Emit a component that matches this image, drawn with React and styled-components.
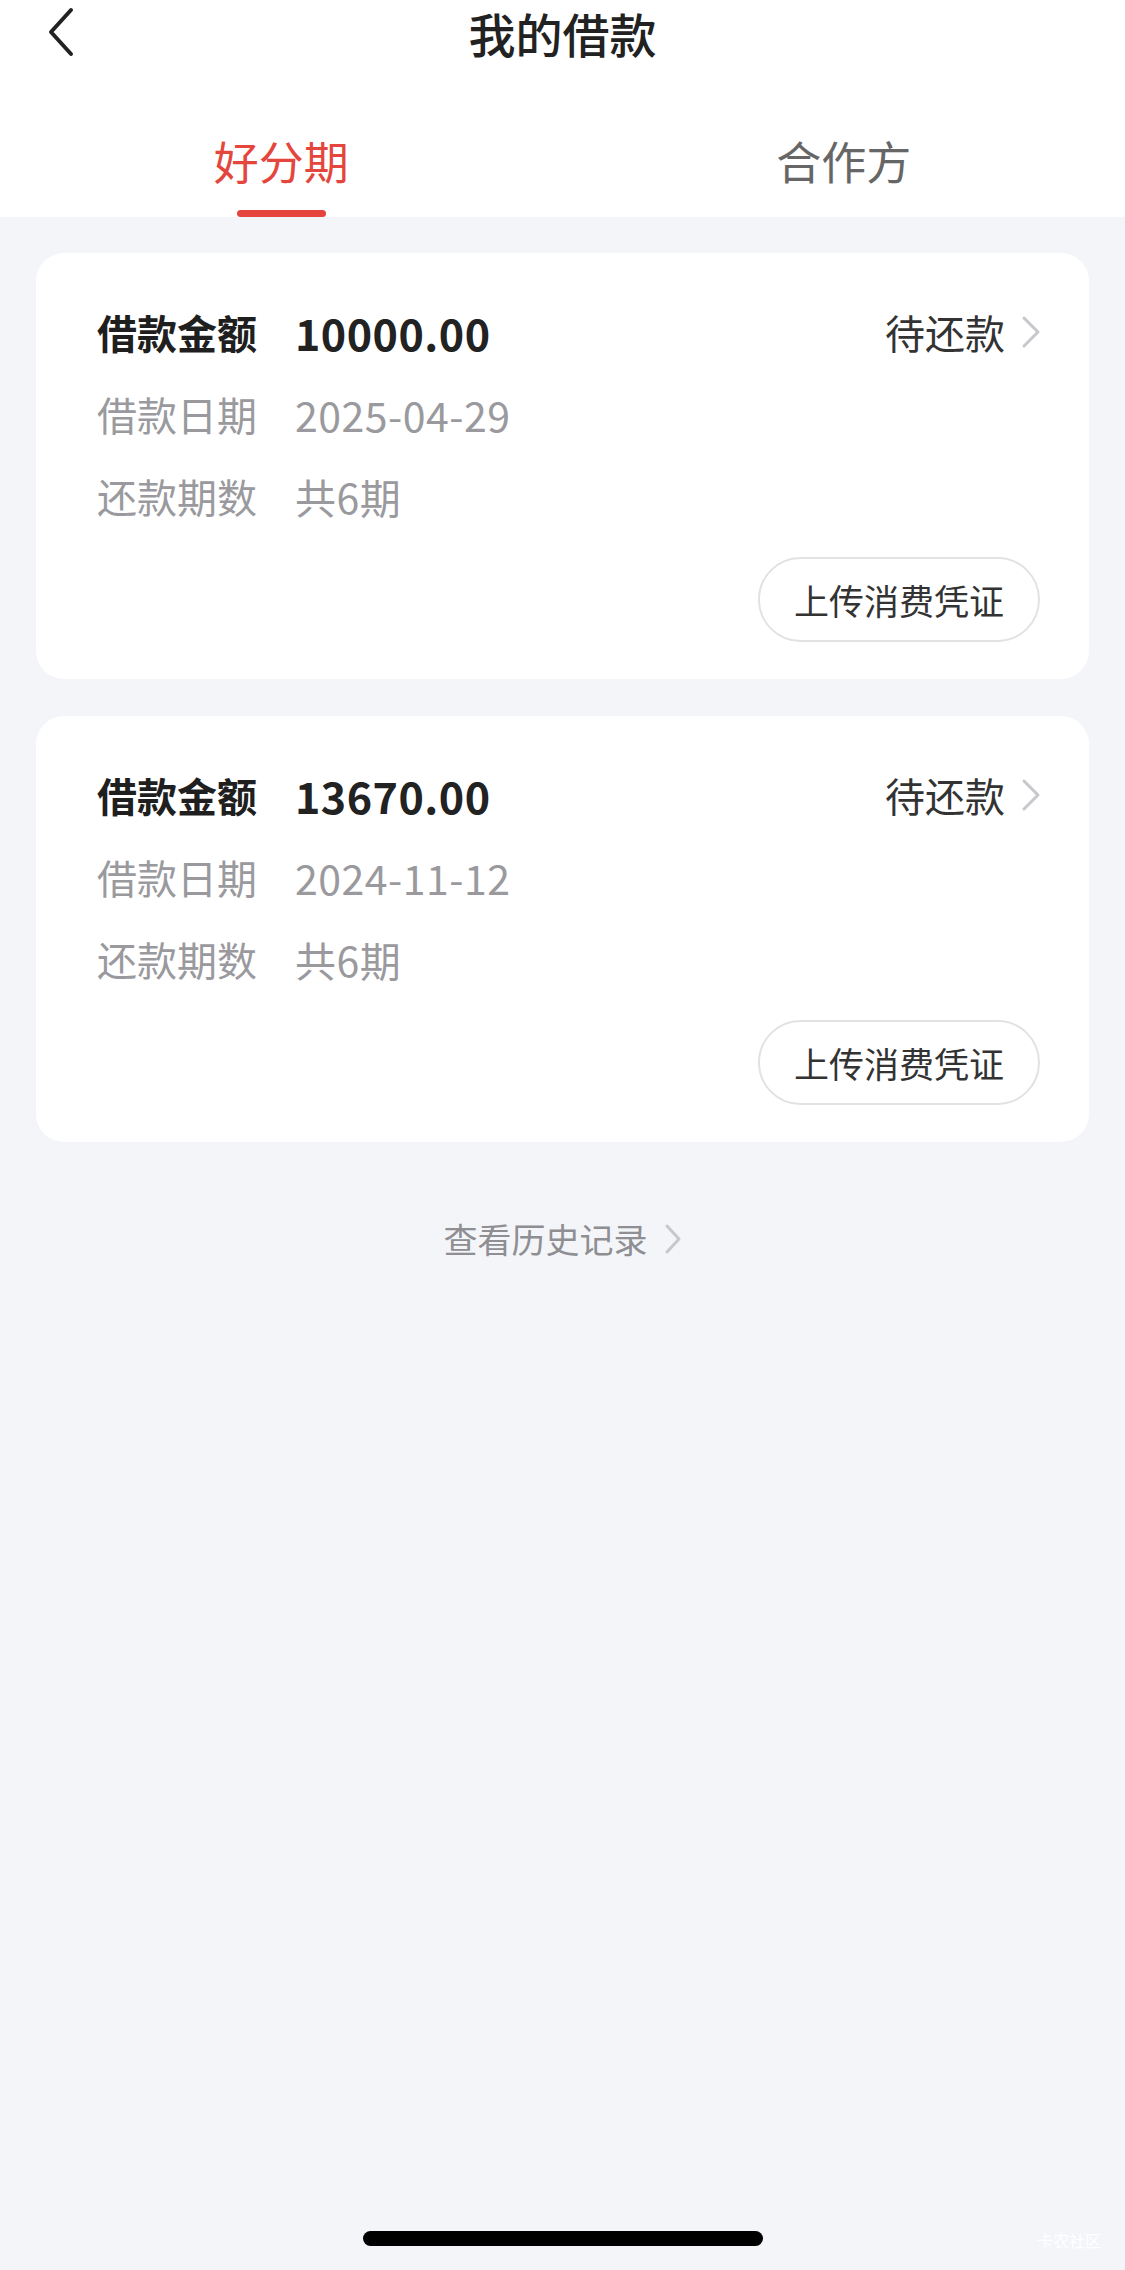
import React, { useState } from "react";
import styled, { createGlobalStyle } from "styled-components";

const GlobalStyle = createGlobalStyle`
  html, body {
    margin: 0;
    padding: 0;
    background: #f4f5f9;
    font-family: "Noto Sans CJK SC", "Noto Sans", sans-serif;
  }
  * { box-sizing: border-box; }
`;

const Page = styled.div`
  width: 1125px;
  min-height: 2270px;
  display: flex;
  flex-direction: column;
  background: #f4f5f9;
  position: relative;
`;

const Header = styled.div`
  background: #fff;
`;

const NavBar = styled.div`
  height: 66px;
  display: flex;
  align-items: center;
  justify-content: center;
  position: relative;
`;

const BackButton = styled.div`
  position: absolute;
  left: 46px;
  top: 6px;
  width: 30px;
  height: 52px;
  display: flex;
  align-items: center;
`;

const Title = styled.div`
  font-size: 47px;
  line-height: 66px;
  font-weight: 500;
  color: #222;
`;

const Tabs = styled.div`
  display: flex;
`;

const Tab = styled.div`
  flex: 1;
  display: flex;
  flex-direction: column;
  align-items: center;
  padding-top: 65px;
`;

const TabLabel = styled.div`
  font-size: 45px;
  line-height: 60px;
  color: ${(p) => (p.$active ? "#e4463d" : "#666")};
  margin-bottom: 19px;
`;

const TabLine = styled.div`
  width: 89px;
  height: 7px;
  border-radius: 4px;
  background: ${(p) => (p.$active ? "#e4463d" : "transparent")};
`;

const Content = styled.div`
  padding: 36px 36px 0;
  display: flex;
  flex-direction: column;
  gap: 37px;
`;

const Card = styled.div`
  background: #fff;
  border-radius: 28px;
  padding: 51px 48px 37px 61px;
  display: flex;
  flex-direction: column;
`;

const Rows = styled.div`
  display: flex;
  flex-direction: column;
  gap: 26px;
`;

const Row = styled.div`
  display: flex;
  align-items: center;
  height: 56px;
`;

const Label = styled.div`
  width: 198px;
  font-size: 40px;
  font-weight: ${(p) => (p.$strong ? 700 : 400)};
  color: ${(p) => (p.$strong ? "#1f1f1f" : "#9a9a9e")};
`;

const Value = styled.div`
  flex: 1;
  font-size: ${(p) => (p.$strong ? "43px" : "41px")};
  font-weight: ${(p) => (p.$strong ? 700 : 400)};
  color: ${(p) => (p.$strong ? "#222" : "#9a9a9e")};
  letter-spacing: 0.5px;
`;

const Status = styled.div`
  display: flex;
  align-items: center;
  gap: 16px;
  font-size: 40px;
  color: #333;
`;

const Actions = styled.div`
  display: flex;
  justify-content: flex-end;
  margin-top: 33px;
`;

const UploadButton = styled.button`
  height: 85px;
  width: 282px;
  margin-right: 1px;
  border-radius: 43px;
  border: 2px solid #e2e2e2;
  background: #fff;
  font-family: inherit;
  font-size: 35px;
  color: #333;
  padding: 0;
`;

const History = styled.div`
  margin-top: 73px;
  display: flex;
  justify-content: center;
  align-items: center;
  gap: 16px;
  font-size: 34px;
  line-height: 48px;
  color: #8e8e93;
`;

const Footer = styled.div`
  margin-top: auto;
  padding-bottom: 24px;
  display: flex;
  justify-content: center;
`;

const HomeIndicator = styled.div`
  width: 400px;
  height: 15px;
  border-radius: 8px;
  background: #000;
`;

const Watermark = styled.div`
  position: absolute;
  right: 24px;
  bottom: 18px;
  font-size: 16px;
  color: #ffffff;
`;

const Chevron = ({ w = 20, h = 32, color = "#c7c7cc", stroke = 3 }) => (
  <svg width={w} height={h} viewBox={`0 0 ${w} ${h}`} fill="none">
    <polyline
      points={`${stroke},${stroke} ${w - stroke},${h / 2} ${stroke},${h - stroke}`}
      stroke={color}
      strokeWidth={stroke}
      strokeLinecap="round"
      strokeLinejoin="round"
    />
  </svg>
);

const loans = [
  { amount: "10000.00", date: "2025-04-29", periods: "共6期" },
  { amount: "13670.00", date: "2024-11-12", periods: "共6期" },
];

function LoanCard({ loan }) {
  return (
    <Card>
      <Rows>
        <Row>
          <Label $strong>借款金额</Label>
          <Value $strong>{loan.amount}</Value>
          <Status>
            待还款
            <Chevron w={20} h={34} />
          </Status>
        </Row>
        <Row>
          <Label>借款日期</Label>
          <Value>{loan.date}</Value>
        </Row>
        <Row>
          <Label>还款期数</Label>
          <Value>{loan.periods}</Value>
        </Row>
      </Rows>
      <Actions>
        <UploadButton>上传消费凭证</UploadButton>
      </Actions>
    </Card>
  );
}

export default function App() {
  const [tab, setTab] = useState(0);
  const tabs = ["好分期", "合作方"];

  return (
    <Page>
      <GlobalStyle />
      <Header>
        <NavBar>
          <BackButton>
            <svg width="30" height="52" viewBox="0 0 30 52" fill="none">
              <polyline
                points="25,4 5,26 25,48"
                stroke="#222"
                strokeWidth="4"
                strokeLinecap="round"
                strokeLinejoin="round"
              />
            </svg>
          </BackButton>
          <Title>我的借款</Title>
        </NavBar>
        <Tabs>
          {tabs.map((t, i) => (
            <Tab key={t} onClick={() => setTab(i)}>
              <TabLabel $active={tab === i}>{t}</TabLabel>
              <TabLine $active={tab === i} />
            </Tab>
          ))}
        </Tabs>
      </Header>
      <Content>
        {loans.map((loan, i) => (
          <LoanCard key={i} loan={loan} />
        ))}
      </Content>
      <History>
        查看历史记录
        <Chevron w={18} h={32} />
      </History>
      <Footer>
        <HomeIndicator />
      </Footer>
      <Watermark>卡农社区</Watermark>
    </Page>
  );
}
